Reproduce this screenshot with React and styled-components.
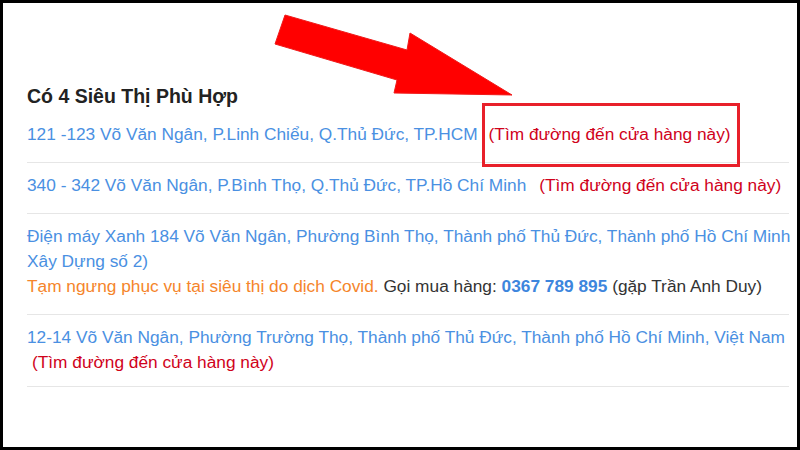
import React from "react";
import styled, { createGlobalStyle } from "styled-components";

const Global = createGlobalStyle`
  html, body { margin: 0; padding: 0; background: #000; }
  body { width: 800px; height: 450px; overflow: hidden; }
  * { box-sizing: border-box; }
`;

const Frame = styled.div`
  position: relative;
  margin: 3px;
  width: 794px;
  height: 444px;
  background: #fff;
  padding: 82px 8px 0 24px;
  font-family: Arial, "Liberation Sans", sans-serif;
  overflow: hidden;
`;

const Heading = styled.h3`
  margin: 0 0 5px;
  font-size: 19.5px;
  line-height: 22px;
  font-weight: bold;
  color: #222;
`;

const List = styled.ul`
  list-style: none;
  margin: 0;
  padding: 0;
`;

const Row = styled.li`
  padding: 10px 0 ${(p) => p.$bottom ?? 15}px;
  border-bottom: 1px solid #e6e6e6;
  font-size: 17.3px;
  line-height: 25px;
  color: #333;
`;

const Address = styled.span`
  color: #4a90e2;
  white-space: nowrap;
  font-size: ${(p) => p.$size ?? "inherit"};
`;

const Direction = styled.span`
  color: #d0021b;
  margin-left: ${(p) => p.$gap ?? 0}px;
  display: ${(p) => (p.$block ? "block" : "inline")};
  white-space: nowrap;
`;

const Notice = styled.span`
  color: #f5852b;
`;

const Phone = styled.b`
  color: #3d86dd;
`;

const Arrow = styled.svg`
  position: absolute;
  left: 0;
  top: 0;
  pointer-events: none;
`;

const Highlight = styled.div`
  position: absolute;
  left: 479px;
  top: 100px;
  width: 258px;
  height: 64px;
  border: 3px solid #e8202a;
  pointer-events: none;
`;

export default function App() {
  return (
    <>
      <Global />
      <Frame>
        <Heading>Có 4 Siêu Thị Phù Hợp</Heading>
        <List>
          <Row>
            <Address>121 -123 Võ Văn Ngân, P.Linh Chiểu, Q.Thủ Đức, TP.HCM</Address>
            <Direction $gap={11}>(Tìm đường đến cửa hàng này)</Direction>
          </Row>
          <Row>
            <Address>340 - 342 Võ Văn Ngân, P.Bình Thọ, Q.Thủ Đức, TP.Hồ Chí Minh</Address>
            <Direction $gap={13}>(Tìm đường đến cửa hàng này)</Direction>
          </Row>
          <Row>
            <Address>
              Điện máy Xanh 184 Võ Văn Ngân, Phường Bình Thọ, Thành phố Thủ Đức, Thành phố Hồ Chí Minh
            </Address>
            <br />
            <Address>Xây Dựng số 2)</Address>
            <br />
            <Notice>Tạm ngưng phục vụ tại siêu thị do dịch Covid.</Notice> Gọi mua hàng:{" "}
            <Phone>0367 789 895</Phone> (gặp Trần Anh Duy)
          </Row>
          <Row $bottom={11}>
            <Address>
              12-14 Võ Văn Ngân, Phường Trường Thọ, Thành phố Thủ Đức, Thành phố Hồ Chí Minh, Việt Nam
            </Address>
            <Direction $block $gap={5}>(Tìm đường đến cửa hàng này)</Direction>
          </Row>
        </List>
        <Arrow width="794" height="444" viewBox="3 3 794 444">
          <polygon
            points="285,15 407,50 410,33 512,95 394,93 397,80 275,44"
            fill="#ff0000"
            stroke="#f01a1a"
            strokeWidth="1"
            strokeLinejoin="miter"
          />
        </Arrow>
        <Highlight />
      </Frame>
    </>
  );
}
